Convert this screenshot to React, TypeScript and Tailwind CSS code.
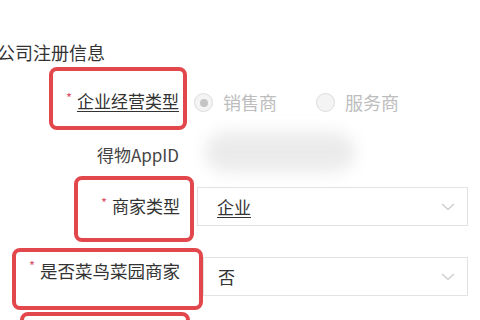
import React from "react";

const font = { fontFamily: '"Noto Sans CJK SC", "Noto Sans", sans-serif' };

function Chevron() {
  return (
    <svg width="14" height="8" viewBox="0 0 14 8" className="absolute right-[12px] top-1/2 -translate-y-1/2">
      <path d="M1 1 L7 6.5 L13 1" fill="none" stroke="#c8c8c8" strokeWidth="1.2" />
    </svg>
  );
}

function Star() {
  return <span className="text-[13px] text-[#d9546a] mr-[5px] relative top-[-3px]">*</span>;
}

export default function App() {
  return (
    <div className="w-[480px] h-[320px] bg-white overflow-hidden relative text-[#333]" style={font}>
      <div className="pt-[40px] ml-[-3px] h-[67px] text-[18px] leading-[24px] text-[#333]">公司注册信息</div>

      {/* Row 1 */}
      <div className="flex items-center h-[63px]">
        <div className="ml-[49px] w-[138px] h-[63px] border-[4px] border-[#e2474b] rounded-[8px] flex items-center justify-end pr-[4px] pt-[4px]">
          <Star />
          <span className="text-[17px] leading-[22px] underline underline-offset-[3px] text-[#333]">企业经营类型</span>
        </div>
        <div className="flex items-center ml-[7px] pt-[8px]">
          <div className="w-[19px] h-[19px] rounded-full border border-[#dcdcdc] bg-[#f4f4f4] flex items-center justify-center">
            <div className="w-[8px] h-[8px] rounded-full bg-[#c4c4c4]" />
          </div>
          <span className="ml-[10px] text-[18px] text-[#bdbdbd]">销售商</span>
          <div className="ml-[39px] w-[19px] h-[19px] rounded-full border border-[#dcdcdc] bg-[#f4f4f4]" />
          <span className="ml-[10px] text-[18px] text-[#bdbdbd]">服务商</span>
        </div>
      </div>

      {/* Row 2 */}
      <div className="flex items-center h-[46px] relative">
        <div className="w-[179px] text-right text-[17px] pt-[4px] text-[#444]">得物AppID</div>
        <div className="absolute left-[205px] top-[2px] w-[150px] h-[40px] bg-[#e6e6e6] rounded-[20px] blur-[8px] opacity-80" />
      </div>

      {/* Row 3 */}
      <div className="flex items-center h-[66px]">
        <div className="ml-[74px] w-[120px] h-[66px] border-[4px] border-[#e2474b] rounded-[8px] flex items-center justify-end pr-[10px] pb-[6px]">
          <Star />
          <span className="text-[17px] leading-[22px] text-[#333]">商家类型</span>
        </div>
        <div className="ml-[3px] w-[271px] h-[39px] border border-[#e2e2e2] relative flex items-center pl-[19px] mb-[5px]">
          <span className="text-[17px] underline underline-offset-[3px] text-[#333]">企业</span>
          <Chevron />
        </div>
      </div>

      {/* Row 4 */}
      <div className="flex items-start h-[70px] pt-[6px]">
        <div className="ml-[12px] w-[191px] h-[62px] border-[4px] border-[#e2474b] rounded-[8px] flex items-start justify-end pr-[19px] pt-[7px]">
          <Star />
          <span className="text-[17.5px] leading-[24px] text-[#333]">是否菜鸟菜园商家</span>
        </div>
        <div className="mt-[9px] w-[265px] h-[39px] border border-[#e2e2e2] relative flex items-center pl-[14px]">
          <span className="text-[17px] text-[#333]">否</span>
          <Chevron />
        </div>
      </div>

      {/* Row 5 (partial) */}
      <div className="ml-[20px] w-[170px] h-[20px] border-[4px] border-[#e2474b] rounded-[8px]" />
    </div>
  );
}
